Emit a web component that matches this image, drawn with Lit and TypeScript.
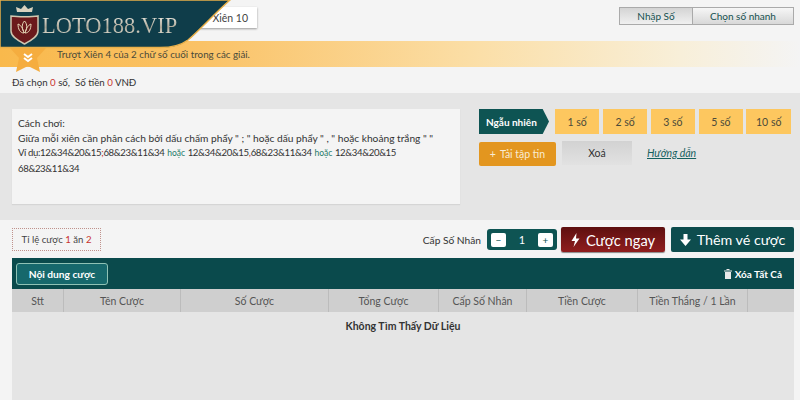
import { LitElement, html, css } from 'lit'
import { customElement } from 'lit/decorators.js'

const COLUMNS = ['Stt', 'Tên Cược', 'Số Cược', 'Tổng Cược', 'Cấp Số Nhân', 'Tiền Cược', 'Tiền Thắng / 1 Lần', '']
const PICKS = ['1 số', '2 số', '3 số', '5 số', '10 số']

@customElement('app-root')
export class AppRoot extends LitElement {
  static styles = css`
    :host {
      display: block;
      position: relative;
      width: 800px;
      height: 400px;
      overflow: hidden;
      background: #f4f4f4;
      color: #333;
      font-family: 'Lato', 'Liberation Sans', sans-serif;
      font-size: 10px;
    }
    .logo {
      position: absolute;
      left: 0;
      top: 0;
      width: 235px;
      height: 50px;
    }
    .logo svg {
      position: absolute;
      left: 0;
      top: 0;
    }
    .logo-text {
      position: absolute;
      left: 42px;
      top: 12px;
      font-family: 'Liberation Serif', serif;
      font-size: 22.500px;
      line-height: 28px;
      white-space: nowrap;
      color: transparent;
      background: linear-gradient(#f2efe6 10%, #a9a596 55%, #e8e4d8 85%);
      -webkit-background-clip: text;
      background-clip: text;
    }
    .top {
      height: 93px;
      box-sizing: border-box;
      padding-top: 7px;
    }
    .tabs {
      display: flex;
      justify-content: space-between;
      height: 21px;
      padding: 0 6px 0 190px;
    }
    .tab {
      width: 67px;
      height: 21px;
      display: flex;
      align-items: center;
      justify-content: flex-end;
      padding-right: 9px;
      box-sizing: border-box;
      background: #fff;
      box-shadow: 0 1px 2px #999;
      font-size: 10.500px;
      color: #444;
    }
    .toggle {
      display: flex;
      height: 16px;
      border: 1px solid #aaa;
    }
    .toggle span {
      display: flex;
      align-items: center;
      justify-content: center;
      color: #15504f;
      font-size: 10px;
    }
    .toggle .on {
      width: 72px;
      background: linear-gradient(#d4d4d4, #f0f0f0);
      border-right: 1px solid #aaa;
    }
    .toggle .off {
      width: 100px;
      background: linear-gradient(#f6f6f6, #d8d8d8);
    }
    .banner {
      height: 26px;
      margin-top: 13px;
      padding-left: 57px;
      display: flex;
      align-items: center;
      position: relative;
      background: linear-gradient(90deg, #f9b94c 0, #fac266 25%, #fbdfa8 60%, #f8efd9 85%, #f4f4f4 100%);
      color: #4a4a3a;
      font-size: 9.800px;
    }
    .star {
      position: absolute;
      left: 10px;
      top: 5px;
    }
    .status {
      padding: 8px 0 0 12px;
      font-size: 9.700px;
      line-height: 14px;
      color: #333;
    }
    .red {
      color: #c8322d;
    }
    .play {
      height: 127px;
      box-sizing: border-box;
      padding: 16px 9px 0 12px;
      background: #e5e5e5;
      display: flex;
      gap: 19px;
    }
    .howto {
      flex: none;
      width: 448px;
      height: 95px;
      box-sizing: border-box;
      padding: 7px 6px;
      background: #f4f4f4;
      box-shadow: 0 1px 1px #d5d5d5;
      font-size: 10.200px;
      line-height: 14.600px;
      color: #333;
    }
    .howto .or {
      color: #1d7a68;
      font-size: 8.500px;
    }
    .nums {
      font-size: 9.600px;
      letter-spacing: -0.350px;
    }
    .controls {
      display: flex;
      flex-direction: column;
      gap: 8px;
    }
    .picks {
      display: flex;
      gap: 3.400px;
    }
    .random {
      width: 70px;
      height: 25px;
      margin-right: 2.500px;
      padding-left: 7px;
      box-sizing: border-box;
      display: flex;
      align-items: center;
      background: #0e5453;
      clip-path: polygon(0 0, 91% 0, 100% 50%, 91% 100%, 0 100%);
      color: #fff;
      font-size: 10px;
      font-weight: 700;
    }
    .pick {
      width: 44.500px;
      height: 25px;
      display: flex;
      align-items: center;
      justify-content: center;
      background: #fdc75f;
      color: #4b4a3a;
      font-size: 10.500px;
    }
    .actions {
      display: flex;
      align-items: center;
      gap: 6px;
    }
    .upload {
      width: 77px;
      height: 24px;
      display: flex;
      align-items: center;
      justify-content: center;
      gap: 4px;
      border-radius: 2px;
      background: #e3961f;
      color: #f9ecd3;
      font-size: 10.500px;
    }
    .clear {
      width: 70px;
      height: 24px;
      margin-top: -2px;
      display: flex;
      align-items: center;
      justify-content: center;
      background: linear-gradient(#d2d2d2, #e2e2e2);
      color: #333;
      font-size: 10.500px;
    }
    .guide {
      margin: -2px 0 0 9px;
      color: #15615f;
      font-size: 10.500px;
      font-style: italic;
      text-decoration: underline;
    }
    .bottom {
      padding: 7px 6px 0 12px;
    }
    .toolbar {
      height: 25px;
      display: flex;
      align-items: center;
      margin-bottom: 6px;
    }
    .rate {
      width: 89px;
      height: 23px;
      box-sizing: border-box;
      display: flex;
      align-items: center;
      justify-content: center;
      border: 1px dotted #c0928c;
      font-size: 9.600px;
      color: #444;
    }
    .mult {
      margin-left: auto;
      margin-right: 6px;
      font-size: 10.200px;
      color: #333;
    }
    .stepper {
      width: 70px;
      height: 21px;
      box-sizing: border-box;
      padding: 0 4px;
      display: flex;
      align-items: center;
      justify-content: space-between;
      border-radius: 3px;
      background: #0e5453;
      color: #fff;
      font-size: 11px;
      margin-right: 4px;
    }
    .stepper i {
      width: 15px;
      height: 14px;
      display: flex;
      align-items: center;
      justify-content: center;
      border-radius: 2px;
      background: #fff;
      color: #0e5453;
      font-style: normal;
      font-size: 10px;
    }
    .go {
      height: 25px;
      box-sizing: border-box;
      display: flex;
      align-items: center;
      justify-content: center;
      gap: 6px;
      border-radius: 2px;
      color: #fff;
      font-size: 14.300px;
    }
    .go.now {
      width: 104px;
      margin-right: 6px;
      background: linear-gradient(#5e1010, #8f1d1d);
      box-shadow: 0 1px 1px #888;
      font-size: 14.700px;
    }
    .go.add {
      width: 123px;
      background: #0e4d4e;
    }
    .bar {
      height: 31px;
      padding: 0 12px 0 4px;
      display: flex;
      align-items: center;
      justify-content: space-between;
      background: #0a4a4c;
      color: #fff;
    }
    .content {
      width: 92px;
      height: 22px;
      box-sizing: border-box;
      display: flex;
      align-items: center;
      justify-content: center;
      border: 1px solid #8fc2b5;
      border-radius: 3px;
      background: #16686c;
      font-size: 10.200px;
      font-weight: 700;
    }
    .wipe {
      display: flex;
      align-items: center;
      gap: 3px;
      font-size: 10px;
      font-weight: 700;
    }
    .head {
      display: grid;
      grid-template-columns: 51px 117px 148px 110px 88px 111px 110px 47px;
      height: 23px;
      background: #cfcfcf;
    }
    .head span {
      display: flex;
      align-items: center;
      justify-content: center;
      border-left: 1px solid #bcbcbc;
      font-size: 10.500px;
      color: #555;
    }
    .head span:first-child {
      border-left: none;
    }
    .empty {
      height: 88px;
      box-sizing: border-box;
      padding-top: 8px;
      background: #e5e5e5;
      text-align: center;
      font-size: 10.500px;
      font-weight: 700;
      color: #333;
    }
  `

  render() {
    return html`
      <div class="top">
        <div class="tabs">
          <div class="tab">Xiên 10</div>
          <div class="toggle">
            <span class="on">Nhập Số</span>
            <span class="off">Chọn số nhanh</span>
          </div>
        </div>
        <div class="banner">
          <svg class="star" width="36" height="26" viewBox="0 0 36 26">
            <path d="M0 2H36L27 12L30 26L18 20L6 26L9 12Z" fill="#f5ad3f" />
            <path d="M14 8l4 3 4-3M14 12l4 3 4-3" stroke="#fff" stroke-width="2" fill="none" />
          </svg>
          <span>Trượt Xiên 4 của 2 chữ số cuối trong các giải.</span>
        </div>
        <div class="status">
          Đã chọn <span class="red">0</span> số,&nbsp; Số tiền <span class="red">0</span> VNĐ
        </div>
      </div>

      <div class="play">
        <div class="howto">
          Cách chơi:<br />
          Giữa mỗi xiên cần phân cách bởi dấu chấm phẩy " ; " hoặc dấu phẩy " , " hoặc khoảng trắng " "<br />
          <span class="nums">Ví dụ:12&34&20&15<span class="red">;</span>68&23&11&34</span>
          <span class="or">hoặc</span>
          <span class="nums">12&34&20&15<span class="red">,</span>68&23&11&34</span>
          <span class="or">hoặc</span>
          <span class="nums">12&34&20&15</span><br />
          <span class="nums">68&23&11&34</span>
        </div>
        <div class="controls">
          <div class="picks">
            <div class="random">Ngẫu nhiên</div>
            ${PICKS.map((p) => html`<div class="pick">${p}</div>`)}
          </div>
          <div class="actions">
            <div class="upload"><span>+</span> Tải tập tin</div>
            <div class="clear">Xoá</div>
            <div class="guide">Hướng dẫn</div>
          </div>
        </div>
      </div>

      <div class="bottom">
        <div class="toolbar">
          <div class="rate"><span>Tỉ lệ cược <span class="red">1</span> ăn <span class="red">2</span></span></div>
          <span class="mult">Cấp Số Nhân</span>
          <div class="stepper"><i>−</i><span>1</span><i>+</i></div>
          <div class="go now">
            <svg width="9" height="14" viewBox="0 0 9 14"><path d="M5.500 0L0.500 8H4L2.500 14L8.500 5.500H5Z" fill="#fff" /></svg>
            Cược ngay
          </div>
          <div class="go add">
            <svg width="11" height="12" viewBox="0 0 11 12"><path d="M3.500 0H7.500V5.500H11L5.500 12L0 5.500H3.500Z" fill="#fff" /></svg>
            Thêm vé cược
          </div>
        </div>
        <div class="bar">
          <div class="content">Nội dung cược</div>
          <div class="wipe">
            <svg width="8" height="10" viewBox="0 0 8 10">
              <path d="M0 1.500H8V2.500H0ZM2.500 0H5.500V1H2.500ZM1 3H7V10H1Z" fill="#e8e8e8" />
            </svg>
            Xóa Tất Cả
          </div>
        </div>
        <div class="head">${COLUMNS.map((c) => html`<span>${c}</span>`)}</div>
        <div class="empty">Không Tìm Thấy Dữ Liệu</div>
      </div>

      <div class="logo">
        <svg width="235" height="50" viewBox="0 0 235 50">
          <path d="M0 0H230C214 14 200 30 188 40C180 46 172 47.500 160 47.500H0Z" fill="#0f3d4a" stroke="#e9b04a" stroke-width="1.500" />
          <path d="M11 16C18 17 32 17 38 16V31C38 37 30 41 24.500 44C19 41 11 37 11 31Z" fill="#6b1a1c" stroke="#cfc7b0" stroke-width="1.500" />
          <path d="M24.500 21C27.500 24 27.500 29 24.500 33C21.500 29 21.500 24 24.500 21ZM18 24C21 25 23 29 24 33C20 33 18 29 18 24ZM31 24C28 25 26 29 25 33C29 33 31 29 31 24Z" fill="none" stroke="#e6d9b8" stroke-width="1" />
          <path d="M17 12L16 7L21 9L24.500 5L28 9L33 7L32 12Z" fill="#d8d2bf" />
        </svg>
        <div class="logo-text">LOTO188.VIP</div>
      </div>
    `
  }
}

declare global {
  interface HTMLElementTagNameMap {
    'app-root': AppRoot
  }
}
